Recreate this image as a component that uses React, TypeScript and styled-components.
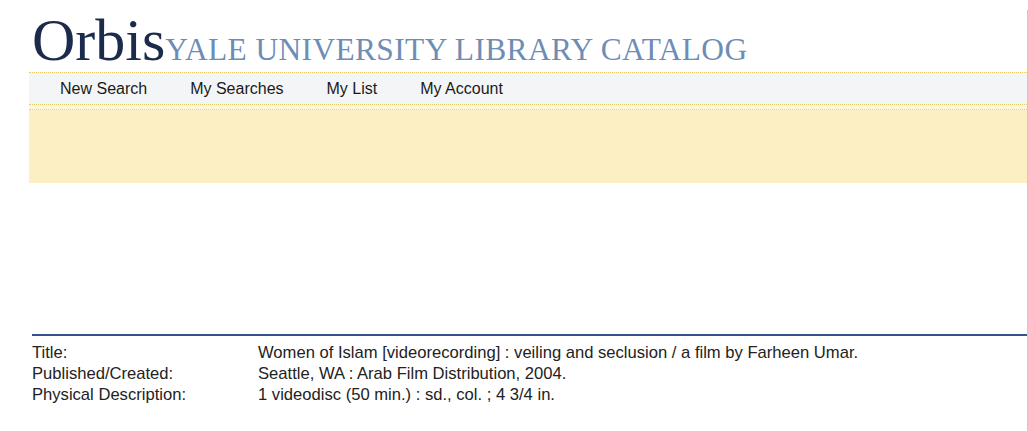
import React from 'react'
import styled, { createGlobalStyle } from 'styled-components'

const GlobalStyle = createGlobalStyle`
  html, body {
    margin: 0;
    padding: 0;
    background: #ffffff;
  }
  body {
    font-family: "Liberation Sans", Arial, Helvetica, sans-serif;
    color: #222;
  }
`

const Page = styled.div`
  margin-top: 10px;
  width: 1027px;
  min-height: 421px;
  border-right: 1px solid #c9c9c9;
`

const Masthead = styled.div`
  display: flex;
  align-items: baseline;
  height: 62px;
  padding-left: 32px;
`

const Logo = styled.span`
  font-family: "Liberation Serif", "Times New Roman", serif;
  font-size: 60px;
  line-height: 1;
  color: #1c2b4c;
`

const Tagline = styled.span`
  font-family: "Liberation Serif", "Times New Roman", serif;
  font-size: 31.4px;
  letter-spacing: 0.4px;
  line-height: 1;
  color: #6e8db6;
`

const NavBar = styled.nav`
  margin-left: 29px;
  height: 31px;
  display: flex;
  align-items: center;
  gap: 43px;
  padding-left: 31px;
  background: #f4f5f6;
  border-top: 1px dotted #e6cc62;
  border-bottom: 1px dotted #e6cc62;

  a {
    font-size: 16px;
    color: #1a1a1a;
    text-decoration: none;
    cursor: pointer;
  }
`

const Banner = styled.div`
  margin-left: 29px;
  height: 78px;
  background: #fdefc4;

  &::before {
    content: '';
    display: block;
    height: 4px;
    background: #fdf5dc;
    border-bottom: 1px dotted #ead37a;
  }
`

const Record = styled.div`
  margin-top: 151px;
  margin-left: 32px;
  border-top: 2px solid #34518a;
  padding-top: 6px;
`

const Field = styled.div`
  display: grid;
  grid-template-columns: 226px 1fr;
  height: 21px;
  align-items: center;
  font-size: 16.6px;
  line-height: 21px;
  color: #222;
`

const fields = [
  ['Title:', 'Women of Islam [videorecording] : veiling and seclusion / a film by Farheen Umar.'],
  ['Published/Created:', 'Seattle, WA : Arab Film Distribution, 2004.'],
  ['Physical Description:', '1 videodisc (50 min.) : sd., col. ; 4 3/4 in.'],
]

export default function App() {
  return (
    <>
      <GlobalStyle />
      <Page>
        <Masthead>
          <Logo>Orbis</Logo>
          <Tagline>YALE UNIVERSITY LIBRARY CATALOG</Tagline>
        </Masthead>
        <NavBar>
          <a>New Search</a>
          <a>My Searches</a>
          <a>My List</a>
          <a>My Account</a>
        </NavBar>
        <Banner />
        <Record>
          {fields.map(([label, value]) => (
            <Field key={label}>
              <span>{label}</span>
              <span>{value}</span>
            </Field>
          ))}
        </Record>
      </Page>
    </>
  )
}
